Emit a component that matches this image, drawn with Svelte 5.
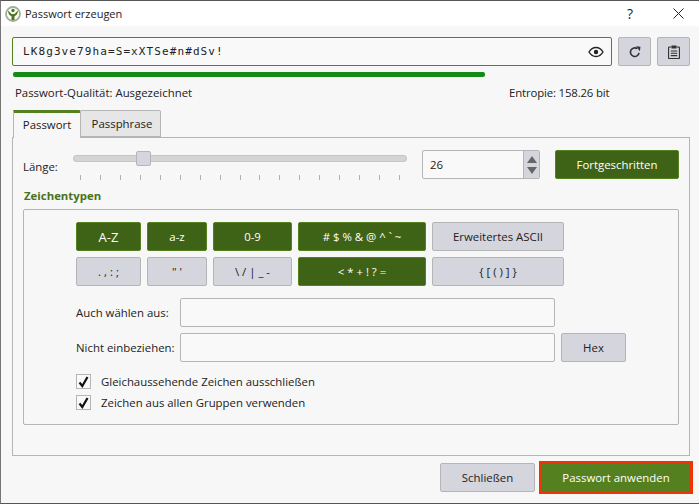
<script>
  const ticks = Array.from({ length: 17 }, (_, i) => i);
  const row1 = [
    { t: 'A-Z', w: 65, on: true, big: true },
    { t: 'a-z', w: 60, on: true },
    { t: '0-9', w: 79, on: true },
    { t: '# $ % & @ ^ ` ~', w: 128, on: true },
    { t: 'Erweitertes ASCII', w: 132, on: false }
  ];
  const row2 = [
    { t: '. , : ;', w: 65, on: false },
    { t: '" \'', w: 60, on: false },
    { t: '\\ / | _ -', w: 79, on: false },
    { t: '< * + ! ? =', w: 128, on: true },
    { t: '{ [ ( ) ] }', w: 132, on: false }
  ];
</script>

<div class="win">
  <header class="title">
    <svg class="logo" width="16" height="16" viewBox="0 0 16 16">
      <circle cx="8" cy="8" r="7" fill="#fff" stroke="#9fae97" stroke-width="1.800" />
      <path d="M3 4.500C3.200 8 4.500 9.500 6.500 10.200V14h3v-3.800C11.500 9.500 12.800 8 13 4.500 11.500 5.500 10.500 6.700 9.500 8h-3C5.500 6.700 4.500 5.500 3 4.500z" fill="#4d7a1f" />
      <circle cx="8" cy="4.500" r="1.700" fill="#4d7a1f" />
    </svg>
    <span class="title-text">Passwort erzeugen</span>
    <span class="q">?</span>
    <svg class="x" width="11" height="11" viewBox="0 0 11 11"><path d="M.5.500l10 10M10.500.500l-10 10" stroke="#222" stroke-width="1" fill="none" /></svg>
  </header>

  <main class="body">
    <div class="pw-row">
      <div class="pw-field">
        <span class="pw">LK8g3ve79ha=S=xXTSe#n#dSv!</span>
        <svg width="16" height="12" viewBox="0 0 16 12"><path d="M1 6c1.800-3 4.200-4.500 7-4.500S13.200 3 15 6c-1.800 3-4.200 4.500-7 4.500S2.800 9 1 6z" fill="none" stroke="#222" stroke-width="1.400" /><circle cx="8" cy="6" r="2.200" fill="#222" /></svg>
      </div>
      <button class="btn icon" aria-label="Neu">
        <svg width="14" height="14" viewBox="0 0 14 14"><path d="M11 7.800A4.300 4.300 0 1 1 9.300 3.700" fill="none" stroke="#333" stroke-width="1.600" /><path d="M8 1.300l4.500.4-.6 4.600z" fill="#333" /></svg>
      </button>
      <button class="btn icon" aria-label="Kopieren">
        <svg width="12" height="14" viewBox="0 0 12 14"><path d="M3.500 2H1.500a1 1 0 0 0-1 1v9.500a1 1 0 0 0 1 1h9a1 1 0 0 0 1-1V3a1 1 0 0 0-1-1h-2" fill="none" stroke="#333" stroke-width="1.200" /><rect x="3.500" y="0.500" width="5" height="3" fill="#333" /><path d="M2.800 6h6.400M2.800 8.300h6.400M2.800 10.600h6.400" stroke="#333" stroke-width="1.100" /></svg>
      </button>
    </div>
    <div class="progress"></div>
    <div class="stats">
      <span>Passwort-Qualität: Ausgezeichnet</span>
      <span class="entropy">Entropie: 158.26 bit</span>
    </div>

    <div class="tabs">
      <div class="tab active">Passwort</div>
      <div class="tab">Passphrase</div>
    </div>

    <section class="panel">
      <div class="len-row">
        <span class="len-label">Länge:</span>
        <div class="slider">
          <div class="groove"><div class="handle"></div></div>
          <div class="ticks">
            {#each ticks as t (t)}<i></i>{/each}
          </div>
        </div>
        <div class="spin">
          <span class="spin-val">26</span>
          <div class="spin-btns">
            <svg width="10" height="7" viewBox="0 0 10 7"><path d="M5 0l5 7H0z" fill="#666" /></svg>
            <svg width="10" height="7" viewBox="0 0 10 7"><path d="M5 7L0 0h10z" fill="#666" /></svg>
          </div>
        </div>
        <button class="btn on adv">Fortgeschritten</button>
      </div>

      <h3 class="group-title">Zeichentypen</h3>
      <div class="group">
        <div class="keys">
          {#each row1 as k (k.t)}
            <button class="btn key" class:on={k.on} class:big={k.big} style="width:{k.w}px">{k.t}</button>
          {/each}
        </div>
        <div class="keys">
          {#each row2 as k (k.t)}
            <button class="btn key" class:on={k.on} style="width:{k.w}px">{k.t}</button>
          {/each}
        </div>

        <div class="form-row first">
          <span class="form-label">Auch wählen aus:</span>
          <div class="text-input"></div>
        </div>
        <div class="form-row">
          <span class="form-label">Nicht einbeziehen:</span>
          <div class="text-input"></div>
          <button class="btn hex">Hex</button>
        </div>

        <label class="check first">
          <span class="box"><svg width="11" height="12" viewBox="0 0 11 12"><path d="M1.500 6.500L4.300 10 9.500 1" fill="none" stroke="#111" stroke-width="2.200" /></svg></span>
          Gleichaussehende Zeichen ausschließen
        </label>
        <label class="check">
          <span class="box"><svg width="11" height="12" viewBox="0 0 11 12"><path d="M1.500 6.500L4.300 10 9.500 1" fill="none" stroke="#111" stroke-width="2.200" /></svg></span>
          Zeichen aus allen Gruppen verwenden
        </label>
      </div>
    </section>

    <footer class="actions">
      <button class="btn close">Schließen</button>
      <button class="btn apply">Passwort anwenden</button>
    </footer>
  </main>
</div>

<style>
  :global(body) { margin: 0; background: #f7f7f7; }
  .win {
    width: 699px; height: 504px; box-sizing: border-box; overflow: hidden;
    border-top: 1px solid #555; border-bottom: 1px solid #555; border-left: 1px solid #777;
    font: 11.4px/16px "Open Sans", "Noto Sans", sans-serif; color: #222;
    display: flex; flex-direction: column; background: #f7f7f7;
  }
  .title { height: 25px; flex: none; background: #fff; display: flex; align-items: center; padding-left: 4px; }
  .logo { margin-right: 4px; }
  .title-text { flex: 1; font-size: 11px; }
  .q { font-size: 14px; width: 14px; margin-right: 32px; }
  .x { margin-right: 15px; }
  .body { flex: 1; padding: 11px 8px 0 11px; display: flex; flex-direction: column; }
  .btn {
    box-sizing: border-box; height: 29px; padding: 0; font: inherit; color: #222; border: 1px solid #b5b5b5;
    border-radius: 2px; background: #d5d5de; display: flex; align-items: center; justify-content: center;
  }
  .btn.on { background: #3f6316; border-color: #558020; color: #fff; }
  .btn.big { font-size: 13px; }
  .pw-row { display: flex; height: 29px; }
  .pw-field {
    box-sizing: border-box; width: 600px; border: 1px solid #558020; border-radius: 2px; background: #f9f9f9;
    display: flex; align-items: center; justify-content: space-between; padding: 0 7px 0 10px;
  }
  .pw { font-family: "DejaVu Sans Mono", monospace; font-size: 11px; letter-spacing: 1.1px; }
  .icon { width: 33px; margin-left: 6px; }
  .progress { width: 472px; height: 5px; margin: 6px 0 0 1px; background: #168a16; border-radius: 2px; }
  .stats { display: flex; margin: 8px 0 0 3px; height: 16px; }
  .stats span:first-child { width: 494px; }
  .entropy { letter-spacing: -0.15px; }
  .tabs { display: flex; margin: 9px 0 0 1px; position: relative; z-index: 1; height: 28px; }
  .tab {
    box-sizing: border-box; height: 27px; width: 80px; padding-left: 3px; background: #e6e6e6; border: 1px solid #b5b5b5;
    border-left: 0; display: flex; align-items: center; justify-content: center; border-radius: 0 2px 0 0;
  }
  .tab.active {
    width: 68px; height: 28px; padding-left: 0; background: #f7f7f7; border: 1px solid #b5b5b5; border-top: 3px solid #558020;
    border-bottom: 0; padding-bottom: 2px;
  }
  .panel {
    box-sizing: border-box; width: 678px; height: 319px; margin-top: -1px;
    border: 1px solid #b5b5b5; padding: 12px 10px 0 10px;
  }
  .len-row { display: flex; height: 29px; }
  .len-label { width: 50px; margin-top: 9px; }
  .slider { width: 334px; position: relative; }
  .groove { height: 7px; margin-top: 5px; background: #d4d4d4; border: 1px solid #c6c6c6; box-sizing: border-box; border-radius: 3px; position: relative; }
  .handle {
    position: absolute; left: 62px; top: -5px; width: 15px; height: 15px; box-sizing: border-box;
    background: #d5d5de; border: 1px solid #b5b5b5; border-radius: 2px;
  }
  .ticks { display: flex; justify-content: space-between; margin: 13px 7px 0 7px; }
  .ticks i { width: 1px; height: 5px; background: #b0b0b0; }
  .spin {
    box-sizing: border-box; width: 118px; height: 29px; margin-left: 15px; border: 1px solid #b5b5b5; border-radius: 2px;
    background: #f9f9f9; display: flex; align-items: center;
  }
  .spin-val { flex: 1; padding-left: 7px; }
  .spin-btns {
    box-sizing: border-box; width: 16px; height: 27px; background: #d5d5de; border-left: 1px solid #b5b5b5;
    display: flex; flex-direction: column; align-items: center; justify-content: center; gap: 4px;
  }
  .adv { width: 124px; margin-left: 15px; }
  .group-title { margin: 9px 0 0 1px; font: inherit; font-weight: 700; color: #4a7319; height: 16px; }
  .group {
    box-sizing: border-box; width: 656px; height: 216px; margin-top: 5px; border: 1px solid #b5b5b5; border-radius: 2px;
    padding: 12px 0 0 52px;
  }
  .keys { display: flex; gap: 6px; margin-bottom: 6px; }
  .form-row { display: flex; align-items: center; height: 29px; margin-bottom: 6px; }
  .form-row.first { margin-top: 12px; }
  .form-label { width: 104px; }
  .text-input { box-sizing: border-box; width: 375px; height: 29px; border: 1px solid #b5b5b5; border-radius: 2px; background: #f9f9f9; }
  .hex { width: 65px; margin-left: 6px; }
  .check { display: flex; align-items: center; height: 15px; margin-bottom: 6px; }
  .check.first { margin-top: 12px; }
  .box {
    box-sizing: border-box; width: 15px; height: 15px; border: 1px solid #b5b5b5; background: #f9f9f9; margin-right: 10px;
    display: flex; align-items: center; justify-content: center;
  }
  .actions { display: flex; justify-content: flex-end; align-items: center; margin: 5px -2px 0 0; }
  .close { width: 95px; margin-right: 4px; }
  .apply { box-sizing: border-box; width: 154px; height: 33px; background: #55801f; color: #fff; border: 3px solid #ee3307; border-radius: 0; }
</style>
